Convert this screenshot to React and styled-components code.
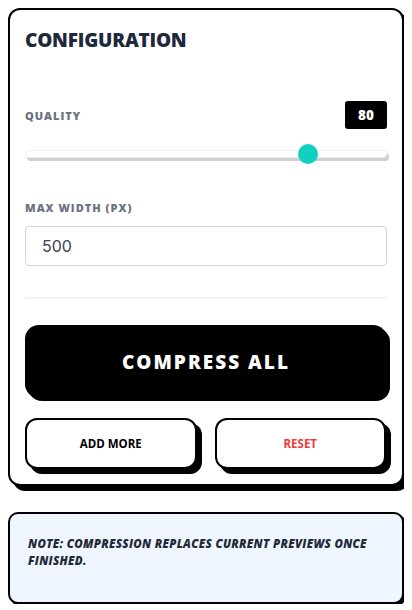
import React, { useState } from "react";
import styled, { createGlobalStyle } from "styled-components";

const GlobalStyle = createGlobalStyle`
  * { box-sizing: border-box; }
  body {
    margin: 8px;
    background: #fff;
    font-family: "Open Sans", "Liberation Sans", sans-serif;
  }
`;

const Card = styled.section`
  border: 2px solid #000;
  border-radius: 12px;
  box-shadow: 5px 5px 0 #000;
  background: #fff;
  padding: 15px 15px 15px;
`;

const Title = styled.h2`
  margin: 0 0 46px;
  font-size: 19px;
  font-weight: 800;
  color: #1e293b;
  letter-spacing: -0.2px;
  line-height: 30px;
`;

const LabelRow = styled.div`
  display: flex;
  justify-content: space-between;
  align-items: center;
`;

const Label = styled.label`
  display: block;
  font-size: 11px;
  font-weight: 800;
  color: #6b7280;
  letter-spacing: 1px;
`;

const Badge = styled.span`
  background: #000;
  color: #fff;
  font-size: 13.5px;
  font-weight: 800;
  border-radius: 3px;
  width: 42px;
  height: 28px;
  display: flex;
  align-items: center;
  justify-content: center;
`;

const Range = styled.input`
  -webkit-appearance: none;
  appearance: none;
  display: block;
  width: 100%;
  height: 20px;
  margin: 15px 0 0;
  background: transparent;

  &::-webkit-slider-runnable-track {
    height: 8px;
    border-radius: 999px;
    background: #fff;
    border: 1px solid #eeeeee;
    box-shadow: 2px 3px 0 #cfcfcf;
  }
  &::-webkit-slider-thumb {
    -webkit-appearance: none;
    width: 20px;
    height: 20px;
    border-radius: 50%;
    background: #11d0c0;
    border: none;
    margin-top: -7px;
  }
`;

const Field = styled.div`
  margin-top: ${p => p.$top || 0}px;
`;

const Input = styled.input`
  display: block;
  width: 100%;
  height: 40px;
  margin-top: 11px;
  padding: 0 16px;
  border: 1px solid #d1d5db;
  border-radius: 4px;
  font-family: Inter, "Liberation Sans", sans-serif;
  font-size: 16px;
  color: #374151;
  outline: none;
`;

const Divider = styled.hr`
  border: none;
  border-top: 2px solid #f1f5f9;
  margin: 31px 0 26px;
`;

const BigButton = styled.button`
  display: block;
  width: 100%;
  height: 73px;
  background: #000;
  color: #fff;
  border: none;
  border-radius: 14px;
  box-shadow: 3px 3px 0 #000;
  font-family: inherit;
  font-size: 19px;
  font-weight: 800;
  letter-spacing: 2px;
  cursor: pointer;
`;

const Row = styled.div`
  display: grid;
  grid-template-columns: 1fr 1fr;
  gap: 18px;
  margin-top: 20px;
  padding-right: 1px;
`;

const SmallButton = styled.button`
  height: 51px;
  background: #fff;
  border: 2px solid #000;
  border-radius: 12px;
  box-shadow: 5px 5px 0 #000;
  font-family: inherit;
  font-size: 11.5px;
  font-weight: 700;
  color: ${p => (p.$danger ? "#ef3b3b" : "#000")};
  cursor: pointer;
`;

const Note = styled.div`
  margin-top: 26px;
  border: 2px solid #000;
  border-radius: 10px;
  box-shadow: 2px 2px 0 #000;
  background: #eff6ff;
  height: 92px;
  padding: 21px 24px 18px 18px;
  font-size: 11.5px;
  font-weight: 800;
  font-style: italic;
  letter-spacing: 0.3px;
  line-height: 17px;
  color: #1f2937;
`;

export default function App() {
  const [quality, setQuality] = useState(80);
  const [width, setWidth] = useState("500");

  return (
    <>
      <GlobalStyle />
      <Card>
        <Title>CONFIGURATION</Title>
        <LabelRow>
          <Label htmlFor="quality">QUALITY</Label>
          <Badge>{quality}</Badge>
        </LabelRow>
        <Range
          id="quality"
          type="range"
          min="0"
          max="100"
          value={quality}
          onChange={e => setQuality(e.target.value)}
        />
        <Field $top={36}>
          <Label htmlFor="maxw">MAX WIDTH (PX)</Label>
          <Input id="maxw" value={width} onChange={e => setWidth(e.target.value)} />
        </Field>
        <Divider />
        <BigButton>COMPRESS ALL</BigButton>
        <Row>
          <SmallButton>ADD MORE</SmallButton>
          <SmallButton $danger>RESET</SmallButton>
        </Row>
      </Card>
      <Note>NOTE: COMPRESSION REPLACES CURRENT PREVIEWS ONCE FINISHED.</Note>
    </>
  );
}
